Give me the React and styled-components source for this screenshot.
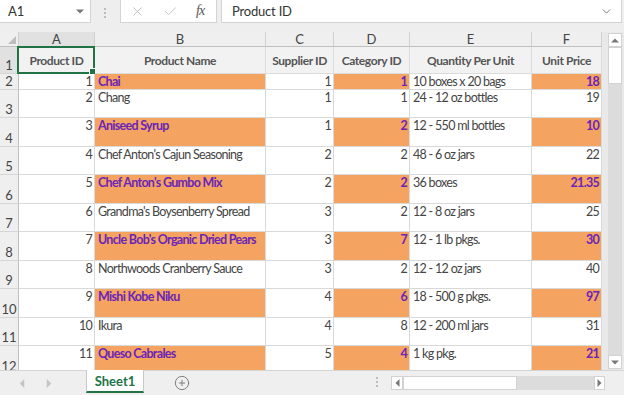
import React from "react";
import styled, { createGlobalStyle } from "styled-components";
import { X, Check, ChevronDown, CirclePlus } from "lucide-react";

const GlobalStyle = createGlobalStyle`
  html, body { margin: 0; padding: 0; background: #ffffff; }
  body { font-family: Lato, "Liberation Sans", sans-serif; }
  * { box-sizing: border-box; }
`;

const GRID = "19px 76px 171px 68px 76px 122px 70px";
const LETTERS = ["A", "B", "C", "D", "E", "F"];
const TITLES = ["Product ID", "Product Name", "Supplier ID", "Category ID", "Quantity Per Unit", "Unit Price"];

// id, name, supplier, category, qty, price
const products = [
  [1, "Chai", 1, 1, "10 boxes x 20 bags", 18],
  [2, "Chang", 1, 1, "24 - 12 oz bottles", 19],
  [3, "Aniseed Syrup", 1, 2, "12 - 550 ml bottles", 10],
  [4, "Chef Anton's Cajun Seasoning", 2, 2, "48 - 6 oz jars", 22],
  [5, "Chef Anton's Gumbo Mix", 2, 2, "36 boxes", 21.35],
  [6, "Grandma's Boysenberry Spread", 3, 2, "12 - 8 oz jars", 25],
  [7, "Uncle Bob's Organic Dried Pears", 3, 7, "12 - 1 lb pkgs.", 30],
  [8, "Northwoods Cranberry Sauce", 3, 2, "12 - 12 oz jars", 40],
  [9, "Mishi Kobe Niku", 4, 6, "18 - 500 g pkgs.", 97],
  [10, "Ikura", 4, 8, "12 - 200 ml jars", 31],
  [11, "Queso Cabrales", 5, 4, "1 kg pkg.", 21],
];

const Window = styled.div`
  width: 624px;
  height: 395px;
  overflow: hidden;
  background: #eeeeee;
  display: flex;
  flex-direction: column;
  color: #444;
`;

/* ---------- formula bar ---------- */
const FormulaBar = styled.div`
  height: 32px;
  flex: none;
  display: flex;
  align-items: flex-start;
`;

const Box = styled.div`
  height: 24px;
  margin-top: -1px;
  background: #fff;
  border: 1px solid #d4d4d4;
  display: flex;
  align-items: center;
`;

const NameBox = styled(Box)`
  width: 92px;
  margin-left: -1px;
  padding: 0 6px 0 8px;
  justify-content: space-between;
  font-size: 13px;
  color: #333;
`;

const FuncBox = styled(Box)`
  width: 97px;
  margin-left: 14px;
  padding-left: 9px;
  gap: 18px;
`;

const FormulaInput = styled(Box)`
  width: 401px;
  margin-left: 4px;
  padding: 0 8px 0 10px;
  justify-content: space-between;
  font-size: 13px;
  letter-spacing: -0.2px;
  color: #333;
`;

const Fx = styled.span`
  font-family: "Liberation Serif", serif;
  font-style: italic;
  font-size: 14px;
  color: #555;
  letter-spacing: -1px;
`;

const VDots = styled.div`
  margin-left: 13px;
  margin-top: 8px;
  display: flex;
  flex-direction: column;
  gap: 2px;
  & > i {
    width: 2px;
    height: 2px;
    background: #bcbcbc;
  }
`;

/* ---------- sheet ---------- */
const Main = styled.div`
  flex: 1;
  display: flex;
  min-height: 0;
`;

const Sheet = styled.div`
  width: 602px;
  background: #fff;
  overflow: hidden;
  display: flex;
  flex-direction: column;
`;

const Row = styled.div`
  display: grid;
  grid-template-columns: ${GRID};
  height: ${(p) => p.$h}px;
  flex: none;
`;

const Corner = styled.div`
  background: #efefef;
  border-right: 1px solid #cfcfcf;
  border-bottom: 1px solid #bfbfbf;
  display: flex;
  align-items: flex-end;
  justify-content: flex-end;
  padding: 0 2px 2px 0;
`;

const ColHead = styled.div`
  background: ${(p) => (p.$active ? "#e1e1e1" : "#efefef")};
  border-right: 1px solid #d0d0d0;
  border-bottom: 1px solid #bfbfbf;
  font-size: 13px;
  line-height: 14px;
  text-align: center;
  color: #444;
`;

const RowHead = styled.div`
  background: ${(p) => (p.$active ? "#e1e1e1" : "#efefef")};
  border-right: 1px solid #bfbfbf;
  border-bottom: 1px solid #d6d6d6;
  font-size: 13px;
  line-height: 14px;
  text-align: center;
  display: flex;
  align-items: flex-end;
  justify-content: center;
  padding-bottom: 1px;
  color: #444;
`;

const Cell = styled.div`
  position: relative;
  background: ${(p) => (p.$fill ? "#f4a460" : "#fff")};
  border-right: 1px solid #d9d9d9;
  border-bottom: 1px solid #d9d9d9;
  font-size: 12.5px;
  letter-spacing: -0.7px;
  line-height: 15px;
  padding: 0 2px 0 3px;
  white-space: nowrap;
  text-align: ${(p) => (p.$num ? "right" : "left")};
  color: ${(p) => (p.$fill ? "#6b24b8" : "#444")};
  font-weight: ${(p) => (p.$fill ? 700 : 400)};
`;

const TitleCell = styled.div`
  position: relative;
  background: #f2f2f2;
  border-right: 1px solid #dcdcdc;
  border-bottom: 1px solid #dcdcdc;
  font-size: 12px;
  letter-spacing: -0.4px;
  font-weight: 700;
  color: #555;
  display: flex;
  align-items: center;
  justify-content: center;
  white-space: nowrap;
`;

const Selection = styled.span`
  position: absolute;
  left: -2px;
  top: -1px;
  right: -1px;
  bottom: -1px;
  border: 2px solid #217346;
  pointer-events: none;
  &::after {
    content: "";
    position: absolute;
    right: -4px;
    bottom: -4px;
    width: 6px;
    height: 6px;
    background: #217346;
    border: 1px solid #fff;
  }
`;

/* ---------- vertical scroll ---------- */
const VScroll = styled.div`
  width: 22px;
  display: flex;
  flex-direction: column;
  padding: 1px 2px 1px 6px;
  background: #e9e9e9;
`;

const ScrollBtn = styled.div`
  background: #fff;
  border: 1px solid #d2d2d2;
  width: ${(p) => p.$w || "auto"};
  height: ${(p) => p.$h || "auto"};
  flex: none;
  display: flex;
  align-items: center;
  justify-content: center;
`;

const Track = styled.div`
  flex: 1;
  background: #dcdcdc;
`;

/* ---------- bottom bar ---------- */
const BottomBar = styled.div`
  height: 25px;
  flex: none;
  display: flex;
  align-items: flex-start;
  border-top: 1px solid #d4d4d4;
  background: #efefef;
`;

const NavArrows = styled.div`
  width: 86px;
  height: 100%;
  display: flex;
  align-items: center;
  padding-left: 19px;
  gap: 21px;
`;

const SheetTab = styled.div`
  width: 58px;
  height: 23px;
  margin-top: -1px;
  background: #fff;
  border-left: 1px solid #c8c8c8;
  border-right: 1px solid #c8c8c8;
  border-bottom: 2px solid #217346;
  display: flex;
  align-items: center;
  justify-content: center;
  font-size: 13px;
  font-weight: 700;
  color: #217346;
`;

const AddSheet = styled.div`
  margin-left: 30px;
  height: 100%;
  display: flex;
  align-items: center;
  color: #777;
`;

const HDots = styled(VDots)`
  margin-left: 186px;
  margin-top: 6px;
`;

const HScroll = styled.div`
  margin-left: 13px;
  margin-top: 5px;
  display: flex;
  height: 14px;
  width: 214px;
`;

const HTrack = styled.div`
  flex: 1;
  background: #dcdcdc;
`;

const Tri = ({ dir, color = "#777", size = 5 }) => {
  const pts = {
    down: "0,0 8,0 4,4",
    up: "0,4 8,4 4,0",
    left: "4,0 4,8 0,4",
    right: "0,0 0,8 4,4",
  }[dir];
  const vertical = dir === "up" || dir === "down";
  return (
    <svg width={vertical ? size + 2 : size - 1} height={vertical ? size - 1 : size + 2} viewBox={vertical ? "0 0 8 4" : "0 0 4 8"}>
      <polygon points={pts} fill={color} />
    </svg>
  );
};

const SelectAll = () => (
  <svg width="8" height="8" viewBox="0 0 8 8">
    <polygon points="8,0 8,8 0,8" fill="#bdbdbd" />
  </svg>
);

const Dots = ({ as }) => {
  const C = as || VDots;
  return (
    <C>
      <i />
      <i />
      <i />
    </C>
  );
};

const rowHeight = (n) => {
  if (n === 1) return 27;
  if (n === 2) return 16;
  return n % 2 ? 28 : 29;
};

export default function App() {
  return (
    <>
      <GlobalStyle />
      <Window>
        <FormulaBar>
          <NameBox>
            <span>A1</span>
            <Tri dir="down" color="#777" size={6} />
          </NameBox>
          <Dots />
          <FuncBox>
            <X size={15} strokeWidth={1.3} color="#b8b8b8" />
            <Check size={15} strokeWidth={1.3} color="#b8b8b8" />
            <Fx>fx</Fx>
          </FuncBox>
          <FormulaInput>
            <span>Product ID</span>
            <ChevronDown size={13} strokeWidth={1.6} color="#666" />
          </FormulaInput>
        </FormulaBar>

        <Main>
          <Sheet>
            <Row $h={15}>
              <Corner>
                <SelectAll />
              </Corner>
              {LETTERS.map((l) => (
                <ColHead key={l} $active={l === "A"}>
                  {l}
                </ColHead>
              ))}
            </Row>
            <Row $h={rowHeight(1)}>
              <RowHead $active>1</RowHead>
              {TITLES.map((t, i) => (
                <TitleCell key={t}>
                  {t}
                  {i === 0 && <Selection />}
                </TitleCell>
              ))}
            </Row>
            {products.map((p, i) => {
              const n = i + 2;
              const hot = p[0] % 2 === 1;
              return (
                <Row key={n} $h={rowHeight(n)}>
                  <RowHead>{n}</RowHead>
                  <Cell $num>{p[0]}</Cell>
                  <Cell $fill={hot}>{p[1]}</Cell>
                  <Cell $num>{p[2]}</Cell>
                  <Cell $num $fill={hot}>{p[3]}</Cell>
                  <Cell>{p[4]}</Cell>
                  <Cell $num $fill={hot}>{p[5]}</Cell>
                </Row>
              );
            })}
          </Sheet>
          <VScroll>
            <ScrollBtn $h="14px">
              <Tri dir="up" color="#777" size={6} />
            </ScrollBtn>
            <ScrollBtn $h="37px" />
            <Track />
            <ScrollBtn $h="14px">
              <Tri dir="down" color="#777" size={6} />
            </ScrollBtn>
          </VScroll>
        </Main>

        <BottomBar>
          <NavArrows>
            <Tri dir="left" color="#c4c4c4" size={7} />
            <Tri dir="right" color="#c4c4c4" size={7} />
          </NavArrows>
          <SheetTab>Sheet1</SheetTab>
          <AddSheet>
            <CirclePlus size={16} strokeWidth={1.4} />
          </AddSheet>
          <Dots as={HDots} />
          <HScroll>
            <ScrollBtn $w="12px">
              <Tri dir="left" color="#777" size={6} />
            </ScrollBtn>
            <ScrollBtn $w="114px" />
            <HTrack />
            <ScrollBtn $w="11px">
              <Tri dir="right" color="#777" size={6} />
            </ScrollBtn>
          </HScroll>
        </BottomBar>
      </Window>
    </>
  );
}
